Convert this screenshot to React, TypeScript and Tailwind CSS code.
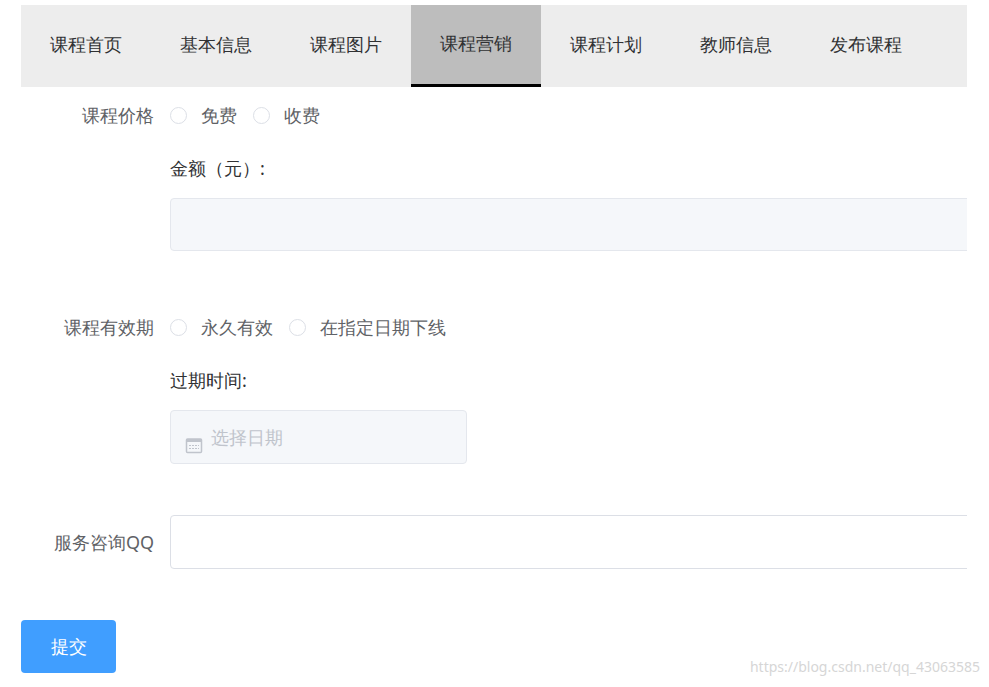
const tabs = ["课程首页", "基本信息", "课程图片", "课程营销", "课程计划", "教师信息", "发布课程"];

function Radio({ label }: { label: string }) {
  return (
    <span className="flex items-center gap-[14px] mr-[16px]">
      <span className="size-[17px] rounded-full border border-[#dcdfe6] bg-white" />
      <span className="text-[#606266]">{label}</span>
    </span>
  );
}

export default function App() {
  return (
    <div className="relative h-[687px] w-[989px] bg-white text-[18px] font-['Microsoft_YaHei','Noto_Sans_CJK_SC',sans-serif]">
      <div className="ml-[21px] w-[946px] overflow-hidden pt-[5px]">
        <div className="flex h-[82px] bg-[#ededed]">
          {tabs.map((t) => (
            <div
              key={t}
              className={`flex w-[130px] items-center justify-center pb-[3px] text-[#303133] ${
                t === "课程营销" ? "border-b-[3px] border-black bg-[#bdbdbd]" : ""
              }`}
            >
              {t}
            </div>
          ))}
        </div>

        <div className="flex pt-[15px]">
          <div className="w-[149px] shrink-0 pr-[16px] text-right text-[#606266] leading-[26px]">课程价格</div>
          <div className="flex-1">
            <div className="flex h-[26px] items-center">
              <Radio label="免费" />
              <Radio label="收费" />
            </div>
            <div className="mt-[28px] leading-[24px] text-[#303133]">金额（元）:</div>
            <div className="mt-[18px] h-[53px] w-[820px] rounded-[4px] border border-[#e4e7ed] bg-[#f5f7fa]" />
          </div>
        </div>

        <div className="flex pt-[63px]">
          <div className="w-[149px] shrink-0 pr-[16px] text-right text-[#606266] leading-[26px]">课程有效期</div>
          <div className="flex-1">
            <div className="flex h-[26px] items-center">
              <Radio label="永久有效" />
              <Radio label="在指定日期下线" />
            </div>
            <div className="mt-[28px] leading-[24px] text-[#303133]">过期时间:</div>
            <div className="mt-[18px] flex h-[54px] w-[297px] items-center gap-[8px] rounded-[4px] border border-[#e4e7ed] bg-[#f5f7fa] pl-[14px]">
              <svg width="18" height="18" viewBox="0 0 18 18" className="mt-[16px]">
                <rect x="1.5" y="3" width="15" height="13.5" rx="1" fill="none" stroke="#c0c4cc" strokeWidth="1.5" />
                <rect x="1.5" y="3" width="15" height="3" fill="#c0c4cc" />
                <path d="M4 9.5h10M4 12.5h10" stroke="#c0c4cc" strokeWidth="1.2" strokeDasharray="2 1" />
              </svg>
              <span className="text-[#c0c4cc]">选择日期</span>
            </div>
          </div>
        </div>

        <div className="mt-[51px] flex items-center">
          <div className="w-[149px] shrink-0 pr-[16px] text-right text-[#606266]">服务咨询QQ</div>
          <div className="h-[54px] w-[820px] shrink-0 rounded-[4px] border border-[#dcdfe6] bg-white" />
        </div>

        <button className="mt-[51px] h-[53px] w-[95px] rounded-[4px] bg-[#409eff] text-white">提交</button>
      </div>
      <div className="absolute bottom-[10px] right-[9px] text-[14px] text-[#d6d6d6] font-['Liberation_Sans',sans-serif]">
        https://blog.csdn.net/qq_43063585
      </div>
    </div>
  );
}
